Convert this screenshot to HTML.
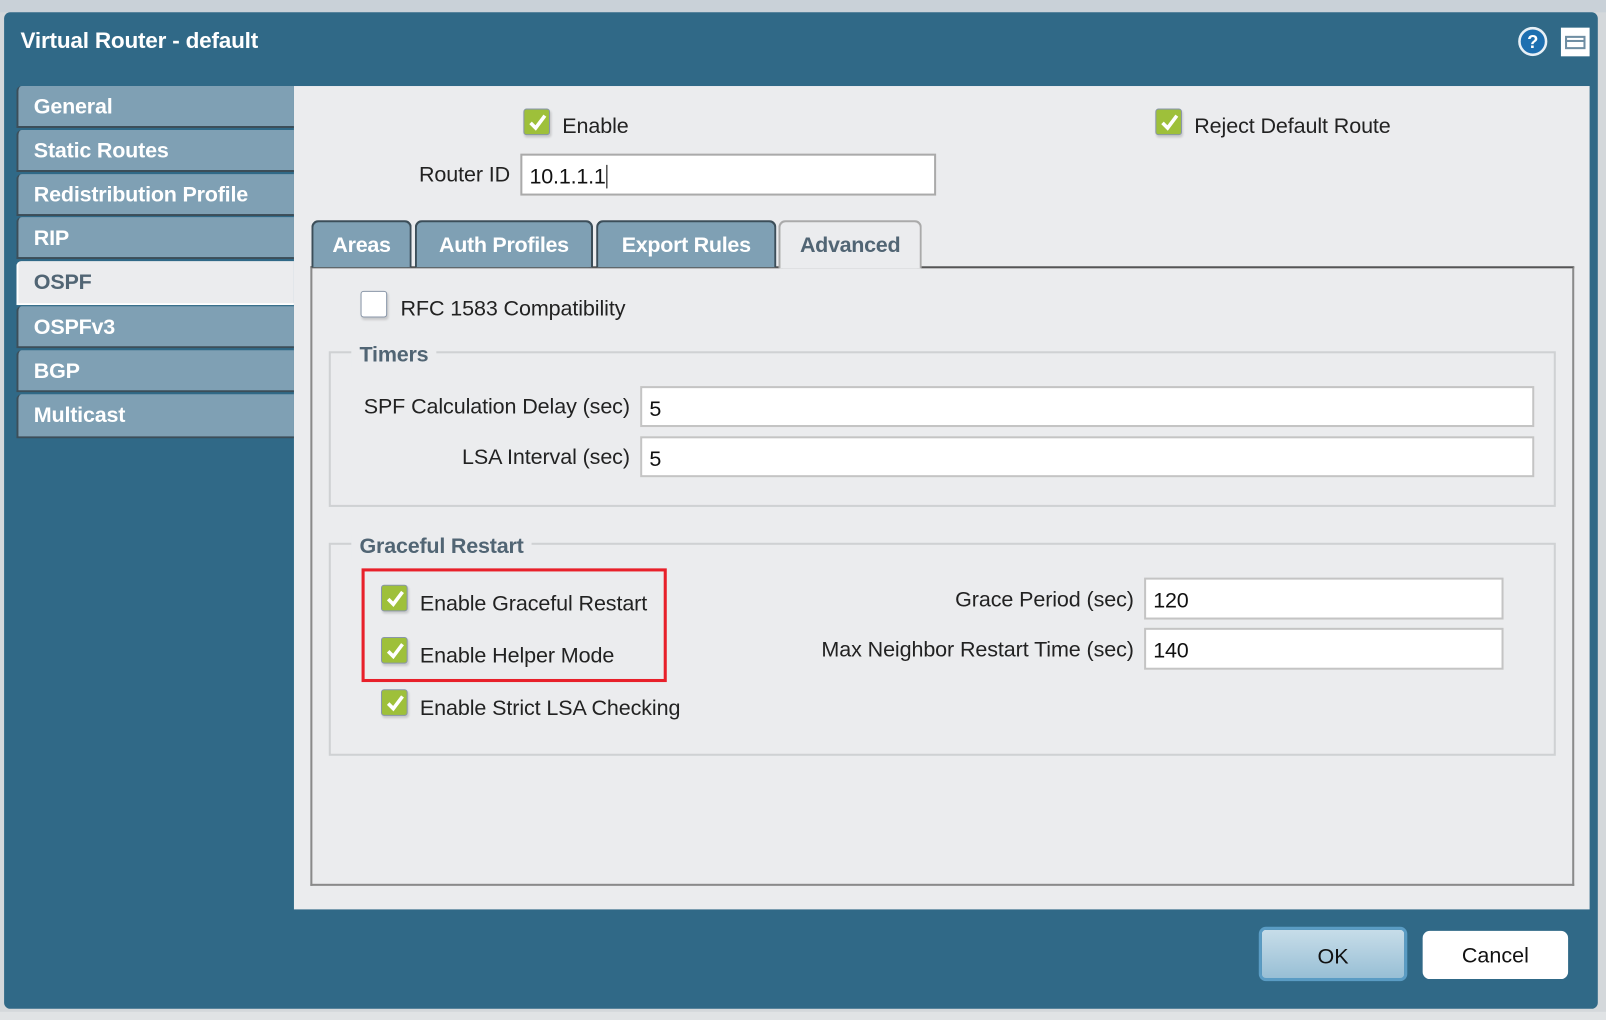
<!DOCTYPE html>
<html><head><meta charset="utf-8"><style>
*{box-sizing:border-box;margin:0;padding:0}
html,body{width:1606px;height:1020px;overflow:hidden;background:#d4d8db;font-family:"Liberation Sans",sans-serif}
#w{position:absolute;left:0;top:0;width:1568px;height:996px;transform:scale(1.02423,1.02410);transform-origin:0 0}
.a{position:absolute}
.dlg{left:4px;top:12px;width:1556px;height:973px;background:#306987;border-radius:6px}
.title{left:20px;top:27px;color:#fff;font-weight:bold;font-size:22px;letter-spacing:-0.2px}
.panel{left:287px;top:84px;width:1265px;height:804px;background:#ebecee}
.st{left:16px;width:271px;height:41px;background:#7fa0b4;border-radius:5px 0 0 0;border-left:2px solid #3c4e59;border-bottom:2px solid #3c4e59;color:#fff;font-weight:bold;font-size:21px;letter-spacing:-0.2px;padding:9px 0 0 15px}
.st.on{background:#ebecee;color:#516574;border-color:#fff}
.lbl{font-size:21px;color:#222;letter-spacing:-0.1px;white-space:nowrap}
.r{text-align:right}
.cb{width:26px;height:26px;border:1px solid #8996a8;border-radius:3px;background:#9ec03a;box-shadow:1px 2px 2px rgba(0,0,0,.15)}
.cb svg{position:absolute;left:3px;top:3px}
.cb.off{background:#fff}
.in{background:#fff;border:2px solid #c4c4c4;font-size:21px;color:#111;padding:9px 0 0 7px;letter-spacing:-0.2px}
.tab{top:215px;height:46px;background:#7fa0b4;border:2px solid #3c4e59;border-bottom:none;border-radius:7px 7px 0 0;color:#fff;font-weight:bold;font-size:21px;letter-spacing:-0.3px;text-align:center;padding-top:11px}
.tab.on{background:#ebecee;color:#516574;border-color:#aaa;height:47px}
.fs{border:2px solid #cfd1d3}
.lg{background:#ebecee;color:#516574;font-weight:bold;font-size:21px;padding:0 8px;letter-spacing:-0.2px}
.btn{font-size:21px;color:#111;text-align:center;border-radius:7px}
</style></head><body><div id="w">
<div class="a" style="left:0;top:0;width:1568px;height:12px;background:#c9d1d8"></div>
<div class="a dlg"></div>
<div class="a title">Virtual Router - default</div>
<svg class="a" style="left:1482px;top:26px" width="29" height="29"><circle cx="14.5" cy="14.5" r="13" fill="#1d6fb0" stroke="#e8f0f6" stroke-width="2.5"/><text x="14.5" y="21" font-family="Liberation Sans" font-weight="bold" font-size="18" fill="#fff" text-anchor="middle">?</text></svg>
<div class="a" style="left:1524px;top:27px;width:28px;height:28px;background:#fff;"></div>
<div class="a" style="left:1528px;top:35px;width:20px;height:13px;border:2px solid #6f8ea3"></div>
<div class="a" style="left:1528px;top:39px;width:20px;height:2px;background:#6f8ea3"></div>
<div class="a panel"></div>
<div class="a st" style="top:84px">General</div>
<div class="a st" style="top:127px">Static Routes</div>
<div class="a st" style="top:170px">Redistribution Profile</div>
<div class="a st" style="top:212px">RIP</div>
<div class="a st on" style="top:255px;height:43px">OSPF</div>
<div class="a st" style="top:299px">OSPFv3</div>
<div class="a st" style="top:342px">BGP</div>
<div class="a st" style="top:385px;height:43px">Multicast</div>

<div class="a cb" style="left:511px;top:106px"><svg width="20" height="20"><path d="M3 10 L8 15 L17 3" fill="none" stroke="#fff" stroke-width="3.5"/></svg></div>
<div class="a lbl" style="left:549px;top:112px">Enable</div>
<div class="a cb" style="left:1128px;top:106px"><svg width="20" height="20"><path d="M3 10 L8 15 L17 3" fill="none" stroke="#fff" stroke-width="3.5"/></svg></div>
<div class="a lbl" style="left:1166px;top:112px">Reject Default Route</div>
<div class="a lbl r" style="left:300px;width:198px;top:159px">Router ID</div>
<div class="a in" style="left:508px;top:150px;width:406px;height:41px;border-color:#aaa">10.1.1.1<span style="border-left:1px solid #000;margin-left:1px"></span></div>

<div class="a" style="left:303px;top:260px;width:1234px;height:605px;border:2px solid #8a8a8a;border-top-color:#555"></div>
<div class="a tab" style="left:304px;width:98px">Areas</div>
<div class="a tab" style="left:405px;width:174px">Auth Profiles</div>
<div class="a tab" style="left:582px;width:176px">Export Rules</div>
<div class="a tab on" style="left:760px;width:140px">Advanced</div>

<div class="a cb off" style="left:352px;top:284px"></div>
<div class="a lbl" style="left:391px;top:290px">RFC 1583 Compatibility</div>

<div class="a fs" style="left:321px;top:343px;width:1198px;height:152px"></div>
<div class="a lg" style="left:343px;top:335px">Timers</div>
<div class="a lbl r" style="left:330px;width:285px;top:386px">SPF Calculation Delay (sec)</div>
<div class="a in" style="left:625px;top:377px;width:873px;height:40px">5</div>
<div class="a lbl r" style="left:330px;width:285px;top:435px">LSA Interval (sec)</div>
<div class="a in" style="left:625px;top:426px;width:873px;height:40px">5</div>

<div class="a fs" style="left:321px;top:530px;width:1198px;height:208px"></div>
<div class="a lg" style="left:343px;top:522px">Graceful Restart</div>
<div class="a" style="left:353px;top:555px;width:298px;height:111px;border:3px solid #e8202a"></div>
<div class="a cb" style="left:372px;top:571px"><svg width="20" height="20"><path d="M3 10 L8 15 L17 3" fill="none" stroke="#fff" stroke-width="3.5"/></svg></div>
<div class="a lbl" style="left:410px;top:578px">Enable Graceful Restart</div>
<div class="a cb" style="left:372px;top:622px"><svg width="20" height="20"><path d="M3 10 L8 15 L17 3" fill="none" stroke="#fff" stroke-width="3.5"/></svg></div>
<div class="a lbl" style="left:410px;top:629px">Enable Helper Mode</div>
<div class="a cb" style="left:372px;top:673px"><svg width="20" height="20"><path d="M3 10 L8 15 L17 3" fill="none" stroke="#fff" stroke-width="3.5"/></svg></div>
<div class="a lbl" style="left:410px;top:680px">Enable Strict LSA Checking</div>
<div class="a lbl r" style="left:700px;width:407px;top:574px">Grace Period (sec)</div>
<div class="a in" style="left:1117px;top:564px;width:351px;height:41px">120</div>
<div class="a lbl r" style="left:700px;width:407px;top:623px">Max Neighbor Restart Time (sec)</div>
<div class="a in" style="left:1117px;top:613px;width:351px;height:41px">140</div>

<div class="a btn" style="left:1229px;top:905px;width:145px;height:53px;background:linear-gradient(#c7dde9,#98bfd5);border:3px solid #5a9cc4;padding-top:15px">OK</div>
<div class="a btn" style="left:1389px;top:909px;width:142px;height:47px;background:#fff;padding-top:13px">Cancel</div>
<div class="a" style="left:0;top:988px;width:1568px;height:8px;background:#e0e3e5"></div>
</div></body></html>
